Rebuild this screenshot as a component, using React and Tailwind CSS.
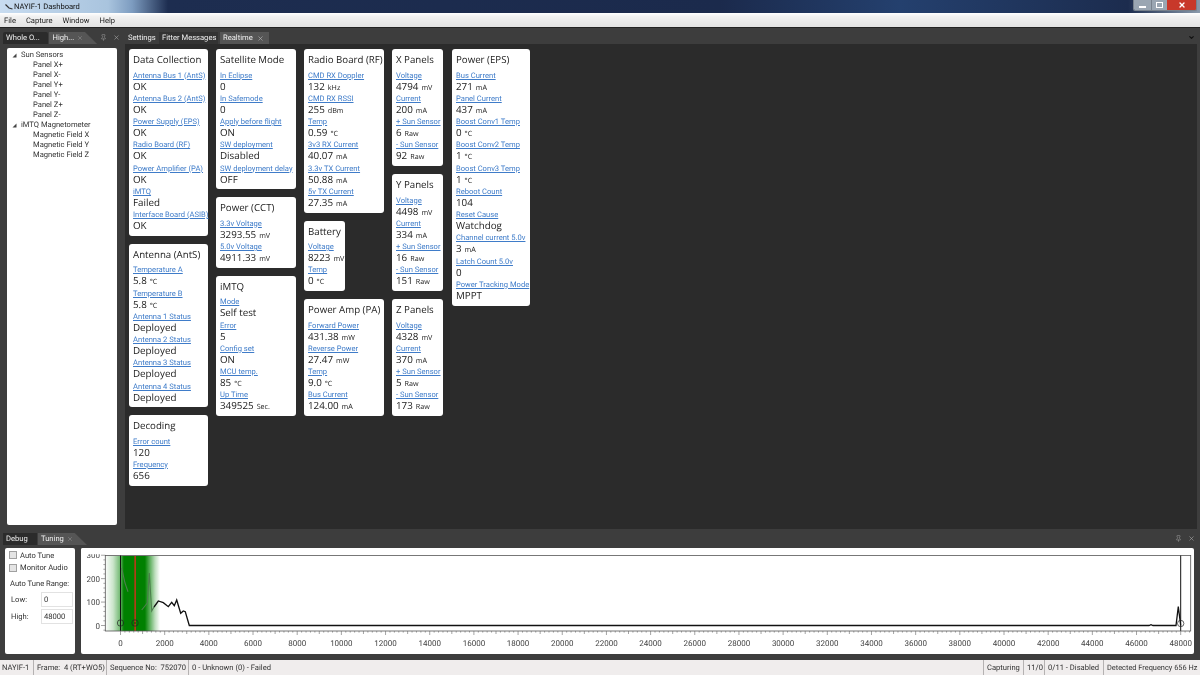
import React from 'react';
import { ChevronDown, Pin, X } from 'lucide-react';

const Row = ({ label, value, unit }) => (
  <div className="h-[23.25px]">
    <div className="h-[11px] whitespace-nowrap text-[7.6px] leading-[12px] text-[#3f7cc9] underline">{label}</div>
    <div className="h-[12.25px] whitespace-nowrap font-['Open_Sans',sans-serif] text-[9.8px] leading-[12px] text-[#222]">
      {value}
      {unit && <span className="ml-[3px] text-[7.2px]">{unit}</span>}
    </div>
  </div>
);

const Card = ({ title, rows, className = '' }) => (
  <div className={`rounded-[3px] bg-white pb-[3.5px] pl-[4px] ${className}`}>
    <div className="h-[20.5px] whitespace-nowrap font-['Open_Sans',sans-serif] text-[9.7px] leading-[21px] text-[#222]">{title}</div>
    {rows.map((r) => (
      <Row key={r[0]} label={r[0]} value={r[1]} unit={r[2]} />
    ))}
  </div>
);

const dataCollection = [
  ['Antenna Bus 1 (AntS)', 'OK'],
  ['Antenna Bus 2 (AntS)', 'OK'],
  ['Power Supply (EPS)', 'OK'],
  ['Radio Board (RF)', 'OK'],
  ['Power Amplifier (PA)', 'OK'],
  ['iMTQ', 'Failed'],
  ['Interface Board (ASIB)', 'OK'],
];
const antenna = [
  ['Temperature A', '5.8', '°C'],
  ['Temperature B', '5.8', '°C'],
  ['Antenna 1 Status', 'Deployed'],
  ['Antenna 2 Status', 'Deployed'],
  ['Antenna 3 Status', 'Deployed'],
  ['Antenna 4 Status', 'Deployed'],
];
const decoding = [
  ['Error count', '120'],
  ['Frequency', '656'],
];
const satellite = [
  ['In Eclipse', '0'],
  ['In Safemode', '0'],
  ['Apply before flight', 'ON'],
  ['SW deployment', 'Disabled'],
  ['SW deployment delay', 'OFF'],
];
const cct = [
  ['3.3v Voltage', '3293.55', 'mV'],
  ['5.0v Voltage', '4911.33', 'mV'],
];
const imtq = [
  ['Mode', 'Self test'],
  ['Error', '5'],
  ['Config set', 'ON'],
  ['MCU temp.', '85', '°C'],
  ['Up Time', '349525', 'Sec.'],
];
const radio = [
  ['CMD RX Doppler', '132', 'kHz'],
  ['CMD RX RSSI', '255', 'dBm'],
  ['Temp', '0.59', '°C'],
  ['3v3 RX Current', '40.07', 'mA'],
  ['3.3v TX Current', '50.88', 'mA'],
  ['5v TX Current', '27.35', 'mA'],
];
const battery = [
  ['Voltage', '8223', 'mV'],
  ['Temp', '0', '°C'],
];
const powerAmp = [
  ['Forward Power', '431.38', 'mW'],
  ['Reverse Power', '27.47', 'mW'],
  ['Temp', '9.0', '°C'],
  ['Bus Current', '124.00', 'mA'],
];
const panel = (v, c, p, m) => [
  ['Voltage', v, 'mV'],
  ['Current', c, 'mA'],
  ['+ Sun Sensor', p, 'Raw'],
  ['- Sun Sensor', m, 'Raw'],
];
const eps = [
  ['Bus Current', '271', 'mA'],
  ['Panel Current', '437', 'mA'],
  ['Boost Conv1 Temp', '0', '°C'],
  ['Boost Conv2 Temp', '1', '°C'],
  ['Boost Conv3 Temp', '1', '°C'],
  ['Reboot Count', '104'],
  ['Reset Cause', 'Watchdog'],
  ['Channel current 5.0v', '3', 'mA'],
  ['Latch Count 5.0v', '0'],
  ['Power Tracking Mode', 'MPPT'],
];

const tree = [
  ['Sun Sensors', ['Panel X+', 'Panel X-', 'Panel Y+', 'Panel Y-', 'Panel Z+', 'Panel Z-']],
  ['iMTQ Magnetometer', ['Magnetic Field X', 'Magnetic Field Y', 'Magnetic Field Z']],
];

const Tree = () => (
  <div className="ml-[7px] h-[477px] w-[110px] rounded-[2px] bg-white pt-[2px] text-[7.6px] leading-[10px] text-[#333]">
    {tree.map(([name, kids]) => (
      <div key={name}>
        <div className="flex h-[10px] items-center pl-[5px]">
          <svg width="5" height="5" viewBox="0 0 5 5" className="mr-[4px]">
            <path d="M4.5 0.5V4.5H0.5Z" fill="#444" />
          </svg>
          {name}
        </div>
        {kids.map((k) => (
          <div key={k} className="h-[10px] pl-[26px]">{k}</div>
        ))}
      </div>
    ))}
  </div>
);

const X0 = 120.5;
const XS = (1180.7 - 120.5) / 48000;
const xp = (v) => X0 + v * XS;
const yp = (v) => 625.5 - (v * 70.3) / 300;

const Chart = () => {
  const minor = [];
  for (let v = 0; v <= 48600; v += 200) minor.push(v);
  const ymin = [];
  for (let v = -20; v <= 300; v += 20) ymin.push(v);
  const labels = [];
  for (let v = 0; v <= 48000; v += 2000) labels.push(v);
  return (
    <svg width="1113" height="106" viewBox="81 548 1113 106" className="block">
      <defs>
        <linearGradient id="band" x1="106" x2="160" y1="0" y2="0" gradientUnits="userSpaceOnUse">
          <stop offset="0" stopColor="#008000" stopOpacity="0.03" />
          <stop offset="0.13" stopColor="#008000" stopOpacity="0.2" />
          <stop offset="0.26" stopColor="#008000" stopOpacity="0.55" />
          <stop offset="0.33" stopColor="#008000" />
          <stop offset="0.72" stopColor="#008000" />
          <stop offset="0.82" stopColor="#008000" stopOpacity="0.6" />
          <stop offset="0.91" stopColor="#008000" stopOpacity="0.25" />
          <stop offset="1" stopColor="#008000" stopOpacity="0" />
        </linearGradient>
      </defs>
      <rect x="106" y="556" width="54" height="75" fill="url(#band)" />
      {/* the trace is washed out where it runs under the green band */}
      <polyline fill="none" stroke="#4d7f4d" strokeWidth="1.1" points="121.7,568 125,583 128,591.7" />
      <polyline fill="none" stroke="#4d7f4d" strokeWidth="1.1" points="141.7,610 147.3,603 149.3,573 151.7,611 154,607" />
      <polyline
        fill="none"
        stroke="#111"
        strokeWidth="1.3"
        points="154,607 158.3,601 163.3,602.7 168.3,606.7 171.7,602.3 174.3,605.7 176.7,600 180.7,613.3 183.3,611 185.3,611.7 189.3,625.5 1149,625.5 1151,624.6 1153,625.5 1176,625.5 1178.3,606.7 1180.7,625.5"
      />
      <rect x="134.4" y="556" width="1.5" height="75" fill="#c8321a" />
      <line x1={X0} x2={X0} y1="555" y2="631" stroke="#111" strokeWidth="1" />
      <line x1="1180.7" x2="1180.7" y1="555" y2="631" stroke="#111" strokeWidth="1" />
      <rect x="105.3" y="555.4" width="1085.4" height="75.6" fill="none" stroke="#555" strokeWidth="0.8" />
      <circle cx={X0} cy="623" r="3.2" fill="none" stroke="#222" strokeWidth="0.7" />
      <circle cx="135" cy="623" r="3.2" fill="none" stroke="#222" strokeWidth="0.7" />
      <circle cx="135" cy="623" r="0.7" fill="#111" />
      <circle cx="1180.7" cy="623.5" r="3.2" fill="none" stroke="#222" strokeWidth="0.7" />
      {minor.map((v) => {
        const x = xp(v);
        if (x > 1190.7) return null;
        const len = v % 2000 === 0 ? 4 : v % 1000 === 0 ? 3 : 1.6;
        return <line key={v} x1={x} x2={x} y1="631" y2={631 + len} stroke="#666" strokeWidth="0.6" />;
      })}
      {ymin.map((v) => (
        <line key={v} x1={v % 100 === 0 ? 101 : 103.4} x2="105.3" y1={yp(v)} y2={yp(v)} stroke="#666" strokeWidth="0.6" />
      ))}
      {[0, 100, 200].map((v) => (
        <text key={v} x="100" y={yp(v) + 3} textAnchor="end" fontSize="8" fill="#444" fontFamily="Roboto, sans-serif">{v}</text>
      ))}
      <text x="100" y="558" textAnchor="end" fontSize="8" fill="#444" fontFamily="Roboto, sans-serif">300</text>
      <rect x="81" y="548" width="24" height="6.2" fill="#fff" />
      {labels.map((v) => (
        <text key={v} x={xp(v)} y="646" textAnchor="middle" fontSize="8" fill="#444" fontFamily="Roboto, sans-serif">{v}</text>
      ))}
    </svg>
  );
};

const Check = ({ label }) => (
  <div className="flex h-[12.5px] items-center gap-[3px] pl-[4px]">
    <div className="h-[8px] w-[8px] border border-[#a0a0a0] bg-[#e4e4e4]" />
    <span className="whitespace-nowrap">{label}</span>
  </div>
);

const Range = ({ label, value }) => (
  <div className="flex h-[17px] items-center pl-[6px]">
    <span className="w-[30px]">{label}</span>
    <div className="h-[15.5px] w-[32px] border border-[#e2e2e2] pl-[2px] leading-[13px]">{value}</div>
  </div>
);

const StatusItem = ({ children, className = '' }) => (
  <div className={`flex h-full items-center whitespace-nowrap border-l border-[#b5b2b2] pl-[3px] ${className}`}>{children}</div>
);

export default function App() {
  return (
    <div className="flex h-[675px] w-[1200px] flex-col overflow-hidden bg-[#3d3d3d] font-['Roboto',sans-serif] blur-[0.3px] [text-rendering:geometricPrecision]">
      {/* title bar */}
      <div className="flex h-[13px] shrink-0 items-center bg-[linear-gradient(90deg,#c8dcf0_0%,#a9c4de_9%,#7d9cc0_11%,#1d2d50_14%,#1b2a4c_60%,#24406e_75%,#1c2c4e_94%,#8a9aab_100%)] text-[7.6px] text-[#111]">
        <svg width="8" height="6" viewBox="0 0 8 6" className="ml-[5px] mr-[1px]">
          <path d="M0.5 0.5L4 4L7.5 5" fill="none" stroke="#333" strokeWidth="1.2" />
        </svg>
        <span>NAYIF-1 Dashboard</span>
        <div className="ml-auto mr-[3px] flex h-[11px] self-start overflow-hidden rounded-b-[2px] border border-t-0 border-[#77818c]">
          <div className="flex w-[17px] items-end justify-center bg-[#9aa6b2] pb-[2px]">
            <div className="h-[2px] w-[7px] bg-white" />
          </div>
          <div className="flex w-[16px] items-center justify-center border-l border-[#77818c] bg-[#9aa6b2]">
            <div className="h-[6px] w-[7px] border border-white" />
          </div>
          <div className="flex w-[29px] items-center justify-center bg-[#c8382a] text-white">
            <X size={8} strokeWidth={4} />
          </div>
        </div>
      </div>

      {/* menu */}
      <div className="flex h-[15px] shrink-0 items-center gap-[10px] border-b-[1.5px] border-[#222] bg-[linear-gradient(#ffffff,#f1f1f1_25%,#e2e2e2)] pl-[4px] pt-[1px] text-[7.6px] text-[#222]">
        <span>File</span>
        <span>Capture</span>
        <span>Window</span>
        <span>Help</span>
      </div>

      {/* workspace */}
      <div className="flex h-[501px] shrink-0">
        <div className="w-[120px] shrink-0">
          <div className="flex h-[16px] items-end pl-[3px] text-[7.6px] text-[#eee]">
            <div className="flex h-[12px] w-[45px] items-center rounded-t-[2px] bg-[#2b2b2b] pl-[3px]">Whole O...</div>
            <div className="ml-[1px] flex h-[12px] w-[49px] items-center bg-[#555] pl-[4px] [clip-path:polygon(0_0,75%_0,100%_100%,0_100%)]">
              High...
              <X size={6} className="ml-[3px] text-[#999]" />
            </div>
            <Pin size={7} className="mb-[3px] ml-[3px] text-[#999]" />
            <X size={7} className="mb-[3px] ml-[6px] text-[#aaa]" />
          </div>
          <div className="pt-[4px]"><Tree /></div>
        </div>

        <div className="ml-[5px] flex flex-1 flex-col">
          <div className="flex h-[16px] shrink-0 items-end whitespace-nowrap text-[7.6px] text-[#f0f0f0]">
            <div className="flex h-[12px] w-[34px] items-center pl-[3px]">Settings</div>
            <div className="flex h-[12px] w-[59px] items-center bg-[#333] pl-[3px]">Fitter Messages</div>
            <div className="ml-[2px] flex h-[12px] w-[49px] items-center bg-[#555] pl-[3px]">
              Realtime
              <X size={7} className="ml-[4px] text-[#bbb]" />
            </div>
            <ChevronDown size={7} strokeWidth={4} className="mb-[3px] ml-auto mr-[5px] text-[#111]" />
          </div>
          <div className="mr-[3px] flex flex-1 items-start gap-[8px] bg-[#2b2b2b] pl-[4px] pt-[5px]">
            <div className="flex w-[79px] flex-col gap-[8px]">
              <Card title="Data Collection" rows={dataCollection} />
              <Card title="Antenna (AntS)" rows={antenna} />
              <Card title="Decoding" rows={decoding} />
            </div>
            <div className="flex w-[80px] flex-col gap-[8px]">
              <Card title="Satellite Mode" rows={satellite} />
              <Card title="Power (CCT)" rows={cct} />
              <Card title="iMTQ" rows={imtq} />
            </div>
            <div className="flex w-[80px] flex-col items-start gap-[8px]">
              <Card title="Radio Board (RF)" rows={radio} className="w-full" />
              <Card title="Battery" rows={battery} className="w-[41px]" />
              <Card title="Power Amp (PA)" rows={powerAmp} className="w-full" />
            </div>
            <div className="flex w-[51px] flex-col gap-[8px]">
              <Card title="X Panels" rows={panel('4794', '200', '6', '92')} />
              <Card title="Y Panels" rows={panel('4498', '334', '16', '151')} />
              <Card title="Z Panels" rows={panel('4328', '370', '5', '173')} />
            </div>
            <div className="ml-[1px] w-[78px]">
              <Card title="Power (EPS)" rows={eps} />
            </div>
          </div>
        </div>
      </div>

      {/* tuning dock */}
      <div className="flex h-[19px] shrink-0 items-end pb-[3px] pl-[3px] text-[7.6px] text-[#eee]">
        <div className="flex h-[12px] w-[34px] items-center bg-[#2b2b2b] pl-[3px]">Debug</div>
        <div className="ml-[1px] flex h-[12px] w-[49px] items-center bg-[#555] pl-[3px] [clip-path:polygon(0_0,75%_0,100%_100%,0_100%)]">
          Tuning
          <X size={6} className="ml-[3px] text-[#999]" />
        </div>
        <Pin size={7} className="mb-[3px] ml-auto text-[#999]" />
        <X size={7} className="mb-[3px] ml-[6px] mr-[5px] text-[#aaa]" />
      </div>
      <div className="flex h-[106px] shrink-0 gap-[6px] pl-[5px]">
        <div className="w-[70px] rounded-[2px] bg-white pt-[1px] text-[7.6px] text-[#333]">
          <Check label="Auto Tune" />
          <Check label="Monitor Audio" />
          <div className="h-[16px] whitespace-nowrap pl-[5px] pt-[4px] leading-[11px]">Auto Tune Range:</div>
          <div className="pt-[1px]">
            <Range label="Low:" value="0" />
            <Range label="High:" value="48000" />
          </div>
        </div>
        <div className="overflow-hidden rounded-[2px] bg-white"><Chart /></div>
      </div>

      {/* status bar */}
      <div className="mt-[6px] flex h-[15px] flex-1 items-center bg-[#f0eded] pl-[2px] text-[7.6px] text-[#333]">
        <div className="w-[31px]">NAYIF-1</div>
        <StatusItem className="w-[73px]">Frame:&nbsp; 4 (RT+WO5)</StatusItem>
        <StatusItem className="w-[82px]">Sequence No:&nbsp; 752070</StatusItem>
        <StatusItem>0 - Unknown (0) - Failed</StatusItem>
        <div className="ml-auto flex h-full">
          <StatusItem className="w-[40px]">Capturing</StatusItem>
          <StatusItem className="w-[21px]">11/0</StatusItem>
          <StatusItem className="w-[59px]">0/11 - Disabled</StatusItem>
          <StatusItem className="w-[97px] text-[7.4px]">Detected Frequency 656 Hz</StatusItem>
        </div>
      </div>
    </div>
  );
}
